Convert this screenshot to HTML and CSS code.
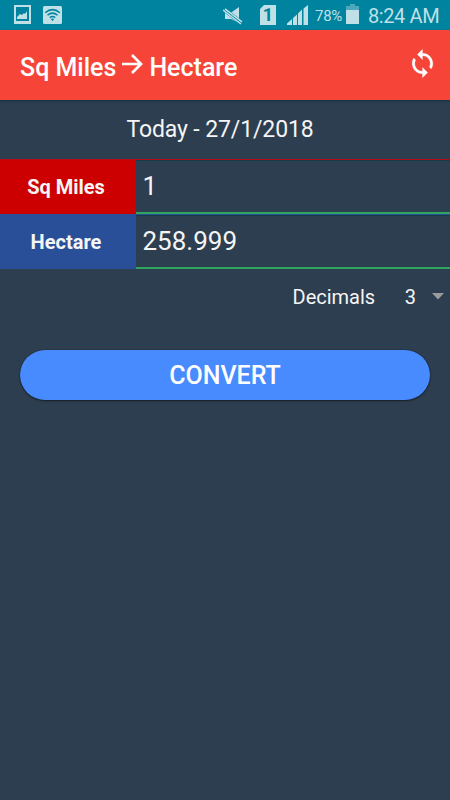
FILE: index.html
```
<!DOCTYPE html>
<html lang="en">
<head>
<meta charset="utf-8">
<title>Sq Miles to Hectare</title>
<link rel="stylesheet" href="styles.css">
</head>
<body>
<div class="status">
  <svg class="photo" width="17" height="20" viewBox="0 0 17 20"><path fill-rule="evenodd" d="M0 0H17V19H0ZM2 2V16H15V2ZM3 14V12L6 9L8 10L10 8L11 9L13 6V14Z"/></svg>
  <svg class="wifi" width="19" height="18" viewBox="0 0 19 18"><rect width="19" height="18" rx="1.5"/><g fill="none" stroke="#00839e" stroke-width="1.5"><path d="M2.2 6.7Q9.5 .5 16.8 6.7M4.5 9.2Q9.5 5 14.5 9.2M6.8 11.6Q9.5 9.4 12.2 11.6"/></g><path fill="#00839e" d="M7.8 13L9.5 15L11.2 13Q9.5 12 7.8 13Z"/></svg>
  <svg class="mute" width="20" height="18" viewBox="0 0 20 18"><path d="M2 5H9L16 0V16L8 12H2Z"/><path d="M2 3L19 16.5" stroke="#00839e" stroke-width="4.4"/><path d="M0 3L18 17M2 1.8L19 14.8" stroke="#bfe0e7" stroke-width="1.5"/></svg>
  <div class="sim">1</div>
  <svg class="signal" width="21" height="20" viewBox="0 0 21 20"><path d="M0 20V18.5L5 14V20ZM6 20V13L10 9.5V20ZM11 20V8.5L15 4.5V20ZM16.5 20V3.5L21 0V20Z"/></svg>
  <span class="percent">78%</span>
  <svg class="battery" width="13" height="20" viewBox="0 0 13 20"><path d="M4 0H9V2H13V20H0V2H4Z" opacity=".4"/><path d="M0 6H13V20H0Z"/></svg>
  <span class="clock">8:24 AM</span>
</div>
<header class="bar">
  <h1>Sq Miles <svg width="21" height="20" viewBox="0 0 21 20"><path d="M0 10H19M10 1L19 10L10 19" fill="none" stroke="#fff" stroke-width="2.7"/></svg> Hectare</h1>
  <svg class="sync" width="31" height="31" viewBox="0 0 24 24"><path d="M12 4V1L8 5l4 4V6c3.31 0 6 2.69 6 6 0 1.01-.25 1.97-.7 2.8l1.46 1.46C19.54 15.03 20 13.57 20 12c0-4.42-3.58-8-8-8zm0 14c-3.31 0-6-2.69-6-6 0-1.01.25-1.97.7-2.8L5.24 7.74C4.46 8.97 4 10.43 4 12c0 4.42 3.58 8 8 8v3l4-4-4-4v3z"/></svg>
</header>
<main>
  <div class="date"><span>Today - 27/1/2018</span></div>
  <div class="row first"><div class="unit from">Sq Miles</div><div class="value">1</div></div>
  <div class="row second"><div class="unit to">Hectare</div><div class="value">258.999</div></div>
  <div class="decimals"><span>Decimals</span><span class="count">3</span><svg width="12" height="7" viewBox="0 0 12 7"><path d="M0 0H12L6 6.5Z" fill="#999b9d"/></svg></div>
  <button class="convert"><span>CONVERT</span></button>
</main>
</body>
</html>
```
FILE: styles.css
```
* { box-sizing: border-box; }
body { margin: 0; height: 800px; overflow: hidden; background: #2d3e50; color: #f5f5f5; font-family: Roboto, sans-serif; }
svg { display: block; flex: none; }
.status { height: 30px; background: #00839e; fill: #bfe0e7; color: #bfe0e7; display: flex; align-items: flex-start; white-space: nowrap; }
.photo { margin: 5px 0 0 14px; }
.wifi { margin: 6px 0 0 12px; }
.mute { margin: 7px 0 0 161px; }
.sim { margin: 5px 0 0 17px; width: 16px; height: 20px; background: #bfe0e7; color: #00839e; font-size: 18px; line-height: 20px; font-weight: 700; text-align: center; clip-path: polygon(4px 0, 100% 0, 100% 100%, 0 100%, 0 4px); }
.signal { margin: 5px 0 0 11px; }
.percent { margin-left: 7px; width: 28px; font-size: 15px; line-height: 32px; letter-spacing: -.3px; }
.battery { margin: 4px 0 0 3px; }
.clock { margin-left: 9px; font-size: 20px; line-height: 32px; letter-spacing: -.4px; }
.bar { height: 70px; background: #f64438; display: flex; justify-content: space-between; padding: 0 12px 0 20px; box-shadow: 0 1px 2px #143244; position: relative; }
h1 { margin: 0; display: flex; color: #fff; font-size: 25px; line-height: 75px; font-weight: 500; white-space: nowrap; }
h1 svg { margin: 24px 6px 0 6px; }
.sync { margin-top: 18px; fill: #fff; stroke: #fff; stroke-width: .2; }
.date { height: 59px; text-align: center; font-size: 23px; line-height: 59px; letter-spacing: -.12px; padding-right: 10px; }
.row { display: flex; height: 55px; border-top: 1px solid; }
.first { border-top-color: #b80b14; }
.second { border-top-color: #2a4f99; }
.unit { width: 136px; text-align: center; font-size: 20px; line-height: 55px; font-weight: 700; padding-right: 4px; }
.from { background: #cc0000; }
.to { background: #2a4f99; }
.value { flex: 1; border-top: 1px solid #173b4b; border-bottom: 2px solid #30a35c; padding-left: 6.5px; font-size: 26px; line-height: 51px; }
.decimals { height: 57px; display: flex; align-items: center; padding: 0 6px 2px 292.5px; font-size: 20px; }
.count { margin-left: auto; }
.decimals svg { margin-left: 16px; }
.convert { display: block; width: 410px; height: 50px; margin: 24px auto 0; border: 0; border-radius: 25px; background: #488bff; color: #fff; font: 500 25px/52px Roboto, sans-serif; padding: 0; box-shadow: 0 1px 2px #111a, 0 0 1px #111; }
```
